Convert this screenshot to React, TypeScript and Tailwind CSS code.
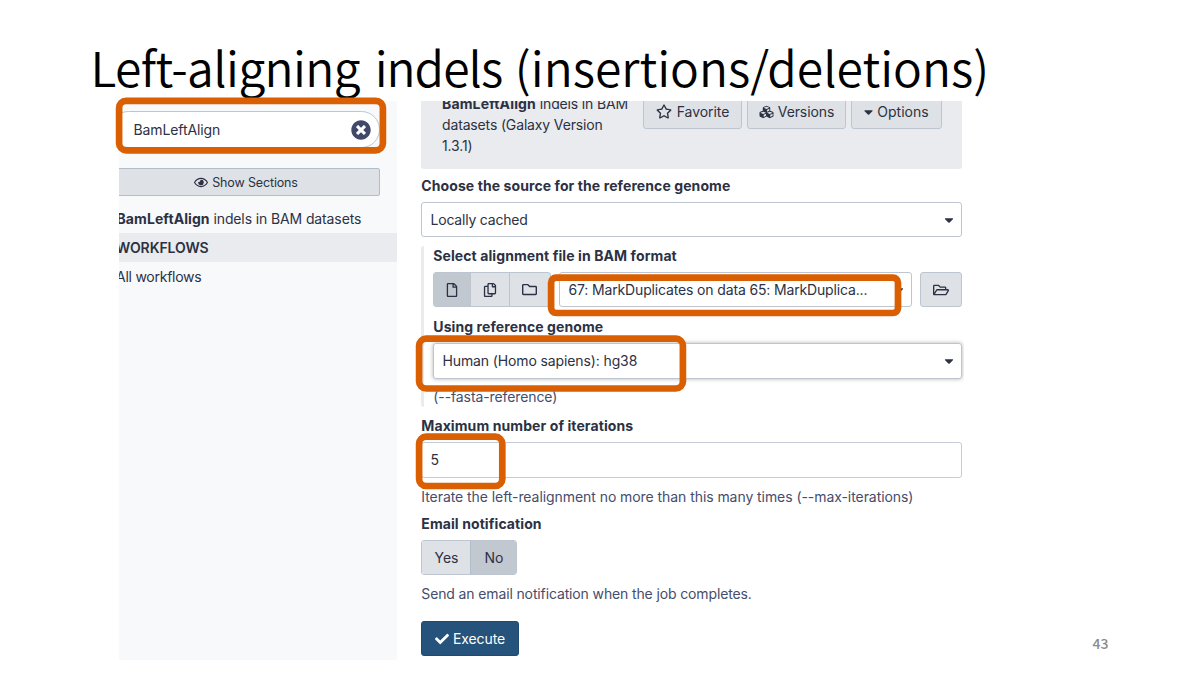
import type { ReactNode } from 'react';
import {
  FaCaretDown,
  FaCheck,
  FaCubes,
  FaRegCopy,
  FaRegEye,
  FaRegFile,
  FaRegFolder,
  FaRegFolderOpen,
  FaRegStar,
  FaTimesCircle,
} from 'react-icons/fa';

function Label({ className = '', children }: { className?: string; children: ReactNode }) {
  return <div className={`h-5 pl-[0.3px] text-[14px] leading-5 font-bold tracking-[0.09px] whitespace-nowrap ${className}`}>{children}</div>;
}

function Help({ className = '', children }: { className?: string; children: ReactNode }) {
  return <div className={`h-5 pl-[0.3px] text-[14px] leading-5 whitespace-nowrap text-[#454d6b] ${className}`}>{children}</div>;
}

function Select({ className = '', children }: { className?: string; children: ReactNode }) {
  return (
    <div className={`flex items-center justify-between rounded-[3px] border border-[#bdc6d0] bg-white pr-[7px] pl-[8.5px] text-[14px] ${className}`}>
      <span className="whitespace-nowrap">{children}</span>
      <FaCaretDown className="h-[14px] w-[10px] shrink-0" />
    </div>
  );
}

function ToolButton({ className = '', children }: { className?: string; children: ReactNode }) {
  return (
    <div className={`flex h-[35px] items-center justify-center rounded-[3px] border border-[#bdc6d0] bg-[#dee2e6] text-[14px] ${className}`}>
      {children}
    </div>
  );
}

function Highlights() {
  return (
    <svg className="pointer-events-none absolute inset-0" width="1200" height="675" fill="none" stroke="#d95f02" strokeWidth="6.7">
      <rect x="119.1" y="100.9" width="263.8" height="49.4" rx="7" />
      <rect x="551.1" y="277.7" width="346.9" height="35.3" rx="5" />
      <rect x="419.1" y="338.7" width="263.8" height="49.8" rx="7" />
      <rect x="419.1" y="436.7" width="83.2" height="49.3" rx="7" />
    </svg>
  );
}

function Sidebar() {
  return (
    <aside className="flex h-full w-[278px] shrink-0 flex-col bg-[#f8f9fb]">
      <div className="mt-[10px] -ml-[9px] flex h-[37px] w-[270px] items-center justify-between rounded-full border border-[#bdc6d0] bg-white pr-[8px] pl-[22.5px]">
        <span className="text-[14px] tracking-[-0.1px]">BamLeftAlign</span>
        <FaTimesCircle className="size-[20px] text-[#41496a]" />
      </div>
      <div className="mt-[20px] -ml-[9px] flex h-[28px] w-[270px] items-center justify-center gap-[4px] rounded-[2px] border border-[#b3bcc9] bg-[#dee2e6] pl-[2px] text-[12.5px] tracking-[-0.14px]">
        <FaRegEye className="h-[13px] w-[14px]" />
        <span className="pt-[2px]">Show Sections</span>
      </div>
      <div className="mt-[13px] -ml-[2.5px] h-5 text-[14px] leading-5 tracking-[-0.12px] whitespace-nowrap">
        <b className="tracking-[0.08px]">BamLeftAlign</b> indels in BAM datasets
      </div>
      <div className="mt-[4px] h-[29px] bg-[#e9ebee] text-[14px] leading-[29px] font-semibold tracking-[-0.1px]">
        <span className="-ml-[3px]">WORKFLOWS</span>
      </div>
      <div className="mt-[5px] -ml-[3px] h-5 text-[14px] leading-5 tracking-[-0.25px]">All workflows</div>
    </aside>
  );
}

function ToolHeader() {
  return (
    <header className="flex h-[68px] items-start overflow-hidden rounded-b-[3px] bg-[#e9ebee] pl-[21px] text-[14px]">
      <div className="-mt-[6.6px] w-[201px] shrink-0 leading-[20.6px] tracking-[-0.15px] whitespace-nowrap">
        <b className="tracking-[0.15px]">BamLeftAlign</b> indels in BAM
        <br />
        datasets (Galaxy Version
        <br />
        1.3.1)
      </div>
      <div className="-mt-[7px] flex gap-[5px]">
        <ToolButton className="w-[99px] gap-[5px] tracking-[-0.05px]">
          <FaRegStar className="h-[15px] w-[16px]" />
          Favorite
        </ToolButton>
        <ToolButton className="w-[99px] gap-[4px] tracking-[-0.1px]">
          <FaCubes className="h-[14px] w-[15px]" />
          Versions
        </ToolButton>
        <ToolButton className="w-[91px] gap-[4px]">
          <FaCaretDown className="h-[14px] w-[9px]" />
          Options
        </ToolButton>
      </div>
    </header>
  );
}

function ToolForm() {
  return (
    <main className="ml-[24px] flex w-[541px] flex-col">
      <ToolHeader />
      <Label className="mt-[7px]">Choose the source for the reference genome</Label>
      <Select className="mt-[6px] h-[35px] tracking-[-0.2px]">Locally cached</Select>

      <section className="mt-[9px] flex h-[161px] flex-col rounded-l-[3px] border-l-[3px] border-[#e9ebee] pl-[9px]">
        <Label>Select alignment file in BAM format</Label>
        <div className="mt-[6px] flex">
          <div className="flex h-[35px] w-[118px] overflow-hidden rounded-[3px] border border-[#bdc6d0] bg-[#dee2e6]">
            <div className="flex w-[37px] items-center justify-center border-r border-[#bdc6d0] bg-[#c1c8d0]">
              <FaRegFile className="size-[14px]" />
            </div>
            <div className="flex w-[39px] items-center justify-center border-r border-[#bdc6d0]">
              <FaRegCopy className="size-[14px]" />
            </div>
            <div className="flex w-[38px] items-center justify-center">
              <FaRegFolder className="size-[15px]" />
            </div>
          </div>
          <Select className="ml-[8px] h-[35px] w-[353px] tracking-[-0.15px]">67: MarkDuplicates on data 65: MarkDuplica...</Select>
          <ToolButton className="ml-[8px] w-[42px]">
            <FaRegFolderOpen className="size-[16px]" />
          </ToolButton>
        </div>
        <Label className="mt-[10px]">Using reference genome</Label>
        <Select className="mt-[6px] h-[36px] pb-px tracking-[-0.12px] shadow-[0_0_4px_rgba(0,0,0,0.3)]">Human (Homo sapiens): hg38</Select>
        <Help className="mt-[8px] tracking-[-0.1px]">(--fasta-reference)</Help>
      </section>

      <Label className="mt-[9px]">Maximum number of iterations</Label>
      <div className="mt-[6px] flex h-[36px] items-center rounded-[3px] border border-[#c5ccd6] bg-white pb-[2px] pl-[8.5px] text-[14px]">5</div>
      <Help className="mt-[9px] tracking-[-0.065px]">Iterate the left-realignment no more than this many times (--max-iterations)</Help>

      <Label className="mt-[7px]">Email notification</Label>
      <div className="mt-[6px] flex h-[35px] w-[96px] overflow-hidden rounded-[3px] border border-[#bdc6d0] text-[14px]">
        <div className="flex w-[49px] items-center justify-center border-r border-[#b3bcc9] bg-[#dee2e6] pl-px">Yes</div>
        <div className="flex flex-1 items-center justify-center bg-[#c1c8d0] pl-px">No</div>
      </div>
      <Help className="mt-[9px] tracking-[-0.13px]">Send an email notification when the job completes.</Help>

      <div className="mt-[17px] flex h-[35px] w-[98px] items-center justify-center gap-[4px] rounded-[3px] border border-[#214a70] bg-[#25537b] text-[14px] tracking-[-0.1px] text-white">
        <FaCheck className="size-[14px]" />
        Execute
      </div>
    </main>
  );
}

export default function App() {
  return (
    <div className="relative h-[675px] w-[1200px] overflow-hidden bg-white font-['Inter',sans-serif] text-[#2c3143]">
      <h1 className="h-[101px] pt-[33px] pl-[90.5px] font-['Noto_Sans_CJK_SC',sans-serif] text-[48px] leading-[67px] font-[350] whitespace-nowrap text-black">
        <span className="mr-[4px] tracking-[-0.6px]">Left-aligning</span> <span className="mr-[2px] tracking-[-1px]">indels</span> (insertions/deletions)
      </h1>
      <div className="ml-[119px] flex h-[559px] w-[845px] overflow-hidden">
        <Sidebar />
        <ToolForm />
      </div>
      <footer className="mt-[-27px] ml-[1092.5px] font-['Noto_Sans_CJK_SC',sans-serif] text-[14px] leading-[20px] font-medium text-[#8b8b8b]">43</footer>
      <Highlights />
    </div>
  );
}
